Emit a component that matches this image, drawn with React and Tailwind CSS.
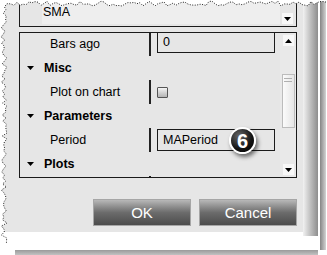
import React from "react";

const seeded = (i) => {
  const v = Math.sin(i * 12.9898 + 78.233) * 43758.5453;
  return v - Math.floor(v);
};

const topPts = [];
for (let x = 8; x <= 327; x += 3) topPts.push([x, 1 + seeded(x) * 5]);
const leftPts = [];
for (let y = 4; y <= 246; y += 3) leftPts.push([1 + seeded(y + 500) * 6, y]);

const TornEdges = () => {
  const edge = [...[...topPts].reverse(), ...leftPts];
  const fill =
    "M0 0 L327 0 " +
    edge.map(([x, y]) => `L${x.toFixed(1)} ${y.toFixed(1)}`).join(" ") +
    " L0 255 Z";
  const line = edge.map(([x, y]) => `${x.toFixed(1)},${y.toFixed(1)}`).join(" ");
  return (
    <svg className="absolute inset-0 pointer-events-none" width="327" height="255">
      <path d={fill} fill="#ffffff" />
      <polyline points={line} fill="none" stroke="#222" strokeWidth="1" strokeDasharray="1 1.5" />
    </svg>
  );
};

const ArrowBox = ({ up }) => (
  <div className="w-[11px] h-[11px] shrink-0 bg-[#f8f8f8] flex items-center justify-center">
    <svg width="7" height="4">
      <path d={up ? "M0 4h7L3.5 0z" : "M0 0h7L3.5 4z"} fill="#000" />
    </svg>
  </div>
);

const PropRow = ({ label, children, h = "h-[24px]", top }) => (
  <div className={`flex shrink-0 ${h}`}>
    <div className="w-[129px] pl-[30px] flex items-center">{label}</div>
    <div className="w-[2px] bg-[#222]" />
    <div className={`flex-1 pl-[6px] flex ${top ? "items-start" : "items-center"}`}>{children}</div>
  </div>
);

const Category = ({ label }) => (
  <div className="flex shrink-0 h-[24px] items-center pl-[7px]">
    <svg width="7" height="4">
      <path d="M0 0h7L3.5 4z" fill="#000" />
    </svg>
    <span className="ml-[10px] font-bold">{label}</span>
  </div>
);

const ValueBox = ({ children, className }) => (
  <div className={`w-[118px] border-[#1a1a1a] pl-[5px] flex items-center ${className}`}>
    {children}
  </div>
);

export default function App() {
  return (
    <div
      className="relative w-[327px] h-[255px] bg-white overflow-hidden text-[12.5px] text-black"
      style={{ fontFamily: '"Liberation Sans", Arial, sans-serif' }}
    >
      <div className="flex">
        {/* dialog */}
        <div className="w-[303px] h-[232px] bg-[#e6e6e6] flex flex-col">
          {/* SMA combo */}
          <div className="ml-[19px] w-[278px] h-[27px] shrink-0 border-x border-b border-[#1a1a1a] flex">
            <div className="ml-[22px] w-[238px] h-[24px] bg-[#eeeeee] flex items-end pb-[2px] pl-[1px]">
              SMA
            </div>
            <div className="ml-[2px] mt-[13px]">
              <ArrowBox />
            </div>
          </div>

          {/* property grid */}
          <div className="mt-[5px] ml-[19px] w-[278px] h-[146px] shrink-0 border border-[#1a1a1a] flex overflow-hidden">
            <div className="w-[260px] flex flex-col">
              <PropRow label="Bars ago" h="h-[23px]" top>
                <ValueBox className="h-[20px] border-x border-b">0</ValueBox>
              </PropRow>
              <Category label="Misc" />
              <PropRow label="Plot on chart">
                <div className="w-[11px] h-[11px] rounded-[1px] border border-[#555] bg-gradient-to-b from-[#f4f4f4] to-[#b4b4b4]" />
              </PropRow>
              <Category label="Parameters" />
              <PropRow label="Period">
                <ValueBox className="h-[22px] border">MAPeriod</ValueBox>
              </PropRow>
              <Category label="Plots" />
              <PropRow label="" />
            </div>
            {/* scrollbar */}
            <div className="w-[16px] bg-[#e9e9e9] flex flex-col items-center pt-[2px] pb-[2px]">
              <ArrowBox up />
              <div className="mt-[28px] w-[13px] h-[54px] shrink-0 border border-[#bcbcbc] bg-gradient-to-r from-[#fbfbfb] to-[#e6e6e6] flex flex-col items-center pt-[3px] gap-[2px]">
                <div className="w-[8px] h-[1px] bg-[#b0b0b0]" />
                <div className="w-[8px] h-[1px] bg-[#b0b0b0]" />
              </div>
              <div className="flex-1" />
              <ArrowBox />
            </div>
          </div>

          {/* buttons */}
          <div className="mt-[21px] ml-[93px] flex gap-[8px]">
            {["OK", "Cancel"].map((t) => (
              <button
                key={t}
                className="w-[98px] h-[27px] border border-[#a6a6a6] bg-gradient-to-b from-[#b8b8b8] via-[#6c6c6c] to-[#4c4c4c] text-white text-[15px] leading-none"
              >
                {t}
              </button>
            ))}
          </div>
        </div>
        {/* right shadows */}
        <div className="w-[15px] h-[236px] bg-gradient-to-r from-[#f2f2f2] to-[#8e8e8e]" />
        <div className="w-[2px]" />
        <div className="w-[6px] h-[250px] bg-gradient-to-r from-[#858585] to-[#d4d4d4]" />
      </div>
      {/* bottom shadows */}
      <div className="ml-[15px] w-[303px] h-[11px] bg-gradient-to-b from-[#9a9a9a] to-[#f4f4f4]" />
      <div className="ml-[15px] mt-[3px] w-[305px] h-[5px] bg-gradient-to-b from-[#7e7e7e] to-[#dadada]" />

      {/* callout badge */}
      <div className="absolute left-[229px] top-[127px] w-[27px] h-[27px] rounded-full border-2 border-white bg-[radial-gradient(circle_at_35%_30%,#666,#111_60%,#000)] shadow-[2px_3px_4px_rgba(0,0,0,0.55)] flex items-center justify-center text-white font-bold text-[20px] leading-none">
        6
      </div>

      <TornEdges />
    </div>
  );
}
